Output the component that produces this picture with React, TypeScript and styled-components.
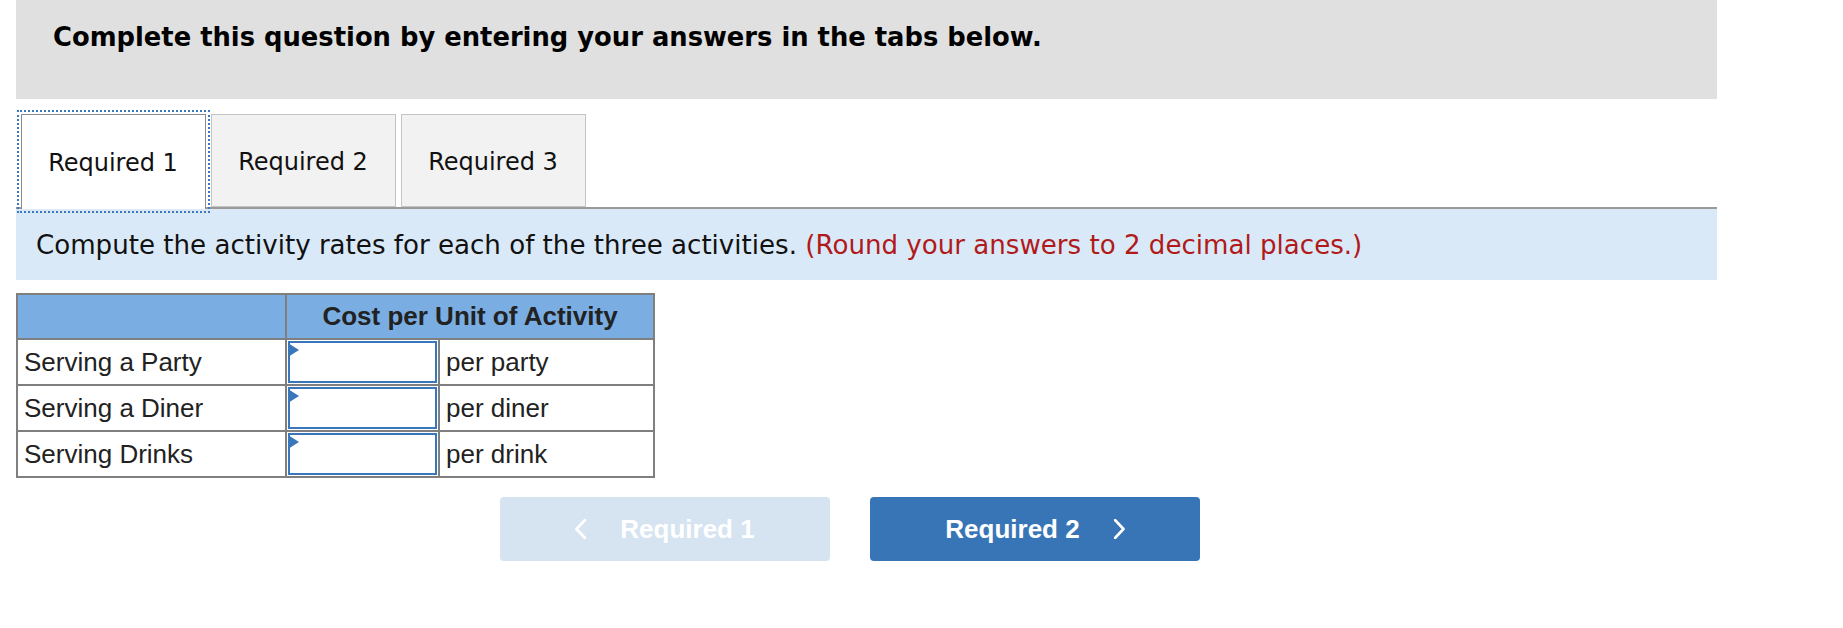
import React from "react";
import styled, { createGlobalStyle } from "styled-components";

const GlobalStyle = createGlobalStyle`
  body {
    margin: 0;
    background: #ffffff;
    font-family: "DejaVu Sans", Verdana, sans-serif;
  }
`;

const App = () => {
  const rows = [
    { label: "Serving a Party", unit: "per party" },
    { label: "Serving a Diner", unit: "per diner" },
    { label: "Serving Drinks", unit: "per drink" },
  ];

  return (
    <Page>
      <GlobalStyle />
      <Banner>Complete this question by entering your answers in the tabs below.</Banner>

      <TabRow>
        <Tab $active>Required 1</Tab>
        <Tab>Required 2</Tab>
        <Tab>Required 3</Tab>
      </TabRow>

      <Instruction>
        Compute the activity rates for each of the three activities.{" "}
        <Hint>(Round your answers to 2 decimal places.)</Hint>
      </Instruction>

      <Grid>
        <colgroup>
          <col style={{ width: 269 }} />
          <col style={{ width: 153 }} />
          <col style={{ width: 215 }} />
        </colgroup>
        <thead>
          <tr>
            <HeadCell />
            <HeadCell colSpan={2}>Cost per Unit of Activity</HeadCell>
          </tr>
        </thead>
        <tbody>
          {rows.map((r) => (
            <tr key={r.label}>
              <LabelCell>{r.label}</LabelCell>
              <InputCell>
                <InputWrap>
                  <Field type="text" aria-label={r.label} />
                  <Marker />
                </InputWrap>
              </InputCell>
              <LabelCell>{r.unit}</LabelCell>
            </tr>
          ))}
        </tbody>
      </Grid>

      <NavRow>
        <NavButton $disabled>
          <Chevron viewBox="0 0 11 20">
            <polyline points="10,1 1.5,10 10,19" />
          </Chevron>
          Required 1
        </NavButton>
        <NavButton>
          Required 2
          <Chevron viewBox="0 0 11 20">
            <polyline points="1,1 9.5,10 1,19" />
          </Chevron>
        </NavButton>
      </NavRow>
    </Page>
  );
};

export default App;

const Page = styled.div`
  padding: 0 0 0 16px;
  width: 1701px;
`;

const Banner = styled.div`
  background: #e0e0e0;
  height: 99px;
  box-sizing: border-box;
  padding: 22px 0 0 37px;
  font-family: "DejaVu Sans", Verdana, sans-serif;
  font-weight: 700;
  font-size: 25.8px;
  color: #000000;
`;

const TabRow = styled.div`
  display: flex;
  align-items: flex-end;
  gap: 5px;
  margin-top: 15px;
  padding-left: 4.5px;
  border-bottom: 2px solid #9a9a9a;
`;

const Tab = styled.div<{ $active?: boolean }>`
  width: 185px;
  height: ${(p) => (p.$active ? "95px" : "93px")};
  margin-bottom: ${(p) => (p.$active ? "-2px" : "0")};
  box-sizing: border-box;
  display: flex;
  align-items: center;
  justify-content: center;
  background: ${(p) => (p.$active ? "#ffffff" : "#f2f2f2")};
  border: 1px solid ${(p) => (p.$active ? "#8c8c8c" : "#c4c4c4")};
  border-bottom: ${(p) => (p.$active ? "none" : "1px solid #c4c4c4")};
  outline: ${(p) => (p.$active ? "2px dotted #3a78c0" : "none")};
  outline-offset: 2px;
  font-size: 24px;
  color: #111111;
  padding-top: 2px;
`;

const Instruction = styled.div`
  background: #dae9f7;
  height: 71px;
  box-sizing: border-box;
  padding: 21px 0 0 20px;
  font-size: 26.1px;
  color: #111111;
`;

const Hint = styled.span`
  color: #b01a1a;
`;

const Grid = styled.table`
  margin-top: 13px;
  border-collapse: collapse;
  table-layout: fixed;
  width: 639px;
  border: 2px solid #7f7f7f;
  font-family: "Liberation Sans", Arial, sans-serif;
  font-size: 26px;
  color: #222222;
`;

const HeadCell = styled.th`
  background: #7aade2;
  border: 2px solid #7f7f7f;
  height: 43px;
  padding: 0;
  font-weight: 700;
  text-align: center;
  vertical-align: middle;
`;

const LabelCell = styled.td`
  border: 2px solid #7f7f7f;
  height: 44px;
  padding: 0 6px;
  vertical-align: middle;
  white-space: nowrap;
`;

const InputCell = styled.td`
  border: 2px solid #7f7f7f;
  height: 42px;
  padding: 1px;
  vertical-align: top;
`;

const InputWrap = styled.div`
  position: relative;
  height: 42px;
`;

const Field = styled.input`
  display: block;
  width: 100%;
  height: 42px;
  box-sizing: border-box;
  border: 2px solid #3a76ba;
  border-radius: 0;
  background: #ffffff;
  padding: 0 6px;
  font-size: 22px;
  outline: none;
`;

const Marker = styled.span`
  position: absolute;
  left: 0;
  top: 2px;
  width: 0;
  height: 0;
  border-top: 7px solid transparent;
  border-bottom: 7px solid transparent;
  border-left: 11px solid #3a76ba;
`;

const NavRow = styled.div`
  width: 1668px;
  display: flex;
  justify-content: center;
  gap: 40px;
  margin-top: 19px;
`;

const NavButton = styled.button<{ $disabled?: boolean }>`
  width: 330px;
  height: 64px;
  border: none;
  border-radius: 4px;
  display: flex;
  align-items: center;
  justify-content: center;
  gap: 34px;
  background: ${(p) => (p.$disabled ? "#d6e4f1" : "#3875b7")};
  color: #ffffff;
  font-family: "Liberation Sans", Arial, sans-serif;
  font-weight: 700;
  font-size: 26px;
  cursor: ${(p) => (p.$disabled ? "default" : "pointer")};
  padding: 0;
`;

const Chevron = styled.svg`
  width: 11px;
  height: 20px;
  fill: none;
  stroke: #ffffff;
  stroke-width: 2.6;
  stroke-linecap: round;
  stroke-linejoin: round;
`;
